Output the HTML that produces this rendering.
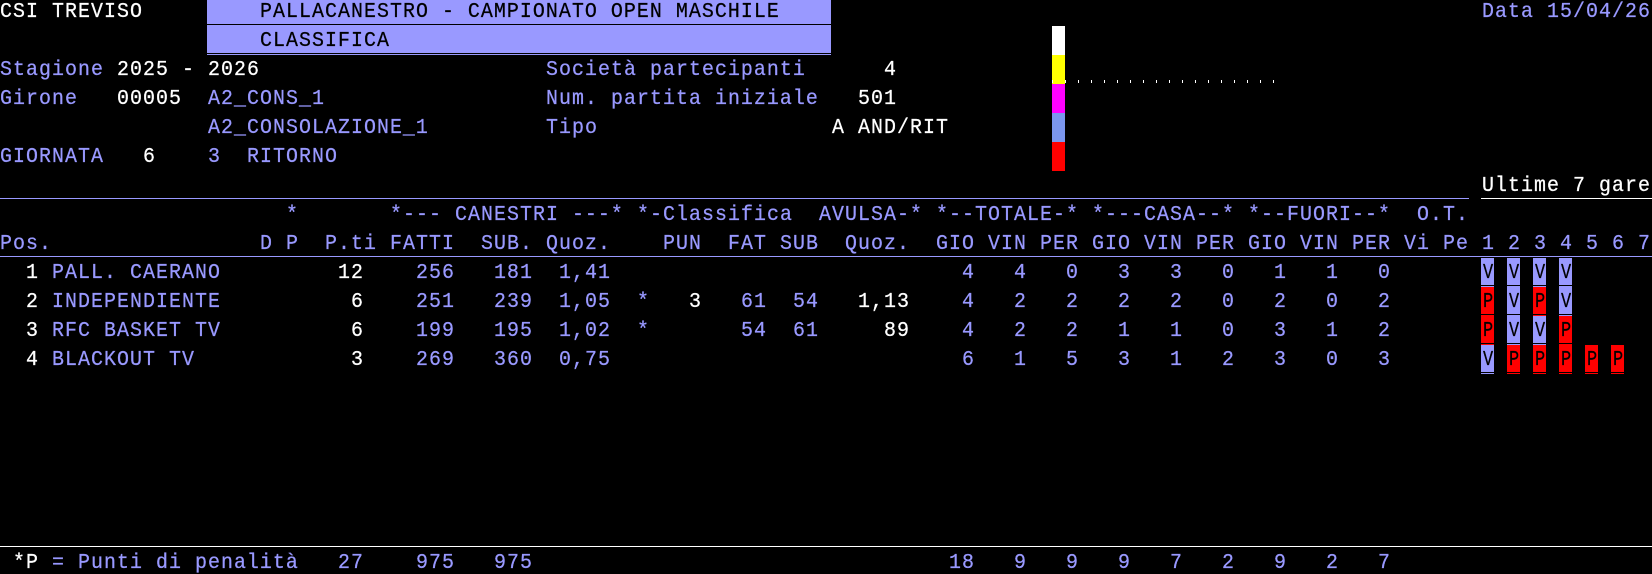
<!DOCTYPE html>
<html lang="it">
<head>
<meta charset="utf-8">
<title>Classifica</title>
<style>
html,body{margin:0;padding:0;background:#000;width:1652px;height:574px;overflow:hidden}
#s{position:relative;width:1652px;height:574px;overflow:hidden;background:#000;
font:21.663px/29px "Liberation Mono","DejaVu Sans Mono",monospace;color:#99f}
.x{position:absolute}
.r{position:absolute;left:0;width:1652px;height:29px}
.r span{position:absolute;top:-1px;white-space:pre;letter-spacing:1.13px;margin-left:.3px;transform:scaleX(.92);transform-origin:0 0;-webkit-text-stroke:.25px currentColor}
.w{color:#fff}
.k{color:#000}
.r span.c{color:#000;transform:scaleX(.78);margin-left:1.4px}
.v,.p{position:absolute;width:13px;height:27px}
.v{background:#99f;box-shadow:0 1px 0 #000,0 2px 0 #99f}
.p{background:#f00;box-shadow:0 1px 0 #000,0 2px 0 #f00}
.d{position:absolute;top:80px;width:1px;height:3px;background:#fff}
</style>
</head>
<body>
<div id="s">
<div class="x" style="left:207px;top:0;width:624px;height:24px;background:#99f"></div>
<div class="x" style="left:207px;top:25px;width:624px;height:28px;background:#99f"></div>
<div class="x" style="left:207px;top:54px;width:624px;height:1px;background:#99f"></div>

<div class="x" style="left:1052px;top:26px;width:13px;height:29px;background:#fff"></div>
<div class="x" style="left:1052px;top:55px;width:13px;height:29px;background:#ff0"></div>
<div class="x" style="left:1052px;top:84px;width:13px;height:29px;background:#f0f"></div>
<div class="x" style="left:1052px;top:113px;width:13px;height:29px;background:#7b96ee"></div>
<div class="x" style="left:1052px;top:142px;width:13px;height:29px;background:#f00"></div>

<i class="d" style="left:1052px"></i><i class="d" style="left:1065px"></i><i class="d" style="left:1078px"></i><i class="d" style="left:1091px"></i><i class="d" style="left:1104px"></i><i class="d" style="left:1117px"></i><i class="d" style="left:1130px"></i><i class="d" style="left:1143px"></i><i class="d" style="left:1156px"></i><i class="d" style="left:1169px"></i><i class="d" style="left:1182px"></i><i class="d" style="left:1195px"></i><i class="d" style="left:1208px"></i><i class="d" style="left:1221px"></i><i class="d" style="left:1234px"></i><i class="d" style="left:1247px"></i><i class="d" style="left:1260px"></i><i class="d" style="left:1273px"></i>

<div class="x" style="left:0;top:198px;width:1469px;height:1px;background:#99f"></div>
<div class="x" style="left:1481px;top:198px;width:171px;height:1px;background:#fff"></div>
<div class="x" style="left:0;top:256px;width:1652px;height:1px;background:#99f"></div>
<div class="x" style="left:0;top:546px;width:1652px;height:1px;background:#fff"></div>

<div class="v" style="left:1481px;top:258px"></div><div class="v" style="left:1507px;top:258px"></div><div class="v" style="left:1533px;top:258px"></div><div class="v" style="left:1559px;top:258px"></div>
<div class="p" style="left:1481px;top:287px"></div><div class="v" style="left:1507px;top:287px"></div><div class="p" style="left:1533px;top:287px"></div><div class="v" style="left:1559px;top:287px"></div>
<div class="p" style="left:1481px;top:316px"></div><div class="v" style="left:1507px;top:316px"></div><div class="v" style="left:1533px;top:316px"></div><div class="p" style="left:1559px;top:316px"></div>
<div class="v" style="left:1481px;top:345px"></div><div class="p" style="left:1507px;top:345px"></div><div class="p" style="left:1533px;top:345px"></div><div class="p" style="left:1559px;top:345px"></div><div class="p" style="left:1585px;top:345px"></div><div class="p" style="left:1611px;top:345px"></div>

<div class="r" style="top:-2px"><span class="w" style="left:0ch">CSI TREVISO</span><span class="k" style="left:20ch">PALLACANESTRO - CAMPIONATO OPEN MASCHILE</span><span style="left:114ch">Data 15/04/26</span></div>
<div class="r" style="top:27px"><span class="k" style="left:20ch">CLASSIFICA</span></div>
<div class="r" style="top:56px"><span style="left:0ch">Stagione</span><span class="w" style="left:9ch">2025 - 2026</span><span style="left:42ch">Società partecipanti</span><span class="w" style="left:68ch">4</span></div>
<div class="r" style="top:85px"><span style="left:0ch">Girone</span><span class="w" style="left:9ch">00005</span><span style="left:16ch">A2_CONS_1</span><span style="left:42ch">Num. partita iniziale</span><span class="w" style="left:66ch">501</span></div>
<div class="r" style="top:114px"><span style="left:16ch">A2_CONSOLAZIONE_1</span><span style="left:42ch">Tipo</span><span class="w" style="left:64ch">A AND/RIT</span></div>
<div class="r" style="top:143px"><span style="left:0ch">GIORNATA</span><span class="w" style="left:11ch">6</span><span style="left:16ch">3  RITORNO</span></div>
<div class="r" style="top:172px"><span class="w" style="left:114ch">Ultime 7 gare</span></div>
<div class="r" style="top:201px"><span style="left:22ch">*</span><span style="left:30ch">*--- CANESTRI ---*</span><span style="left:49ch">*-Classifica</span><span style="left:63ch">AVULSA-*</span><span style="left:72ch">*--TOTALE-*</span><span style="left:84ch">*---CASA--*</span><span style="left:96ch">*--FUORI--*</span><span style="left:109ch">O.T.</span></div>
<div class="r" style="top:230px"><span style="left:0ch">Pos.</span><span style="left:20ch">D P</span><span style="left:25ch">P.ti</span><span style="left:30ch">FATTI</span><span style="left:37ch">SUB.</span><span style="left:42ch">Quoz.</span><span style="left:51ch">PUN</span><span style="left:56ch">FAT</span><span style="left:60ch">SUB</span><span style="left:65ch">Quoz.</span><span style="left:72ch">GIO</span><span style="left:76ch">VIN</span><span style="left:80ch">PER</span><span style="left:84ch">GIO</span><span style="left:88ch">VIN</span><span style="left:92ch">PER</span><span style="left:96ch">GIO</span><span style="left:100ch">VIN</span><span style="left:104ch">PER</span><span style="left:108ch">Vi</span><span style="left:111ch">Pe</span><span style="left:114ch">1</span><span style="left:116ch">2</span><span style="left:118ch">3</span><span style="left:120ch">4</span><span style="left:122ch">5</span><span style="left:124ch">6</span><span style="left:126ch">7</span></div>

<div class="r" style="top:259px"><span class="w" style="left:2ch">1</span><span style="left:4ch">PALL. CAERANO</span><span class="w" style="left:26ch">12</span><span style="left:32ch">256</span><span style="left:38ch">181</span><span style="left:43ch">1,41</span><span style="left:74ch">4</span><span style="left:78ch">4</span><span style="left:82ch">0</span><span style="left:86ch">3</span><span style="left:90ch">3</span><span style="left:94ch">0</span><span style="left:98ch">1</span><span style="left:102ch">1</span><span style="left:106ch">0</span><span class="c" style="left:114ch">V</span><span class="c" style="left:116ch">V</span><span class="c" style="left:118ch">V</span><span class="c" style="left:120ch">V</span></div>
<div class="r" style="top:288px"><span class="w" style="left:2ch">2</span><span style="left:4ch">INDEPENDIENTE</span><span class="w" style="left:27ch">6</span><span style="left:32ch">251</span><span style="left:38ch">239</span><span style="left:43ch">1,05</span><span style="left:49ch">*</span><span class="w" style="left:53ch">3</span><span style="left:57ch">61</span><span style="left:61ch">54</span><span class="w" style="left:66ch">1,13</span><span style="left:74ch">4</span><span style="left:78ch">2</span><span style="left:82ch">2</span><span style="left:86ch">2</span><span style="left:90ch">2</span><span style="left:94ch">0</span><span style="left:98ch">2</span><span style="left:102ch">0</span><span style="left:106ch">2</span><span class="c" style="left:114ch">P</span><span class="c" style="left:116ch">V</span><span class="c" style="left:118ch">P</span><span class="c" style="left:120ch">V</span></div>
<div class="r" style="top:317px"><span class="w" style="left:2ch">3</span><span style="left:4ch">RFC BASKET TV</span><span class="w" style="left:27ch">6</span><span style="left:32ch">199</span><span style="left:38ch">195</span><span style="left:43ch">1,02</span><span style="left:49ch">*</span><span style="left:57ch">54</span><span style="left:61ch">61</span><span class="w" style="left:68ch">89</span><span style="left:74ch">4</span><span style="left:78ch">2</span><span style="left:82ch">2</span><span style="left:86ch">1</span><span style="left:90ch">1</span><span style="left:94ch">0</span><span style="left:98ch">3</span><span style="left:102ch">1</span><span style="left:106ch">2</span><span class="c" style="left:114ch">P</span><span class="c" style="left:116ch">V</span><span class="c" style="left:118ch">V</span><span class="c" style="left:120ch">P</span></div>
<div class="r" style="top:346px"><span class="w" style="left:2ch">4</span><span style="left:4ch">BLACKOUT TV</span><span class="w" style="left:27ch">3</span><span style="left:32ch">269</span><span style="left:38ch">360</span><span style="left:43ch">0,75</span><span style="left:74ch">6</span><span style="left:78ch">1</span><span style="left:82ch">5</span><span style="left:86ch">3</span><span style="left:90ch">1</span><span style="left:94ch">2</span><span style="left:98ch">3</span><span style="left:102ch">0</span><span style="left:106ch">3</span><span class="c" style="left:114ch">V</span><span class="c" style="left:116ch">P</span><span class="c" style="left:118ch">P</span><span class="c" style="left:120ch">P</span><span class="c" style="left:122ch">P</span><span class="c" style="left:124ch">P</span></div>

<div class="r" style="top:549px"><span class="w" style="left:1ch">*P</span><span style="left:4ch">= Punti di penalità</span><span style="left:26ch">27</span><span style="left:32ch">975</span><span style="left:38ch">975</span><span style="left:73ch">18</span><span style="left:78ch">9</span><span style="left:82ch">9</span><span style="left:86ch">9</span><span style="left:90ch">7</span><span style="left:94ch">2</span><span style="left:98ch">9</span><span style="left:102ch">2</span><span style="left:106ch">7</span></div>
</div>
</body>
</html>
